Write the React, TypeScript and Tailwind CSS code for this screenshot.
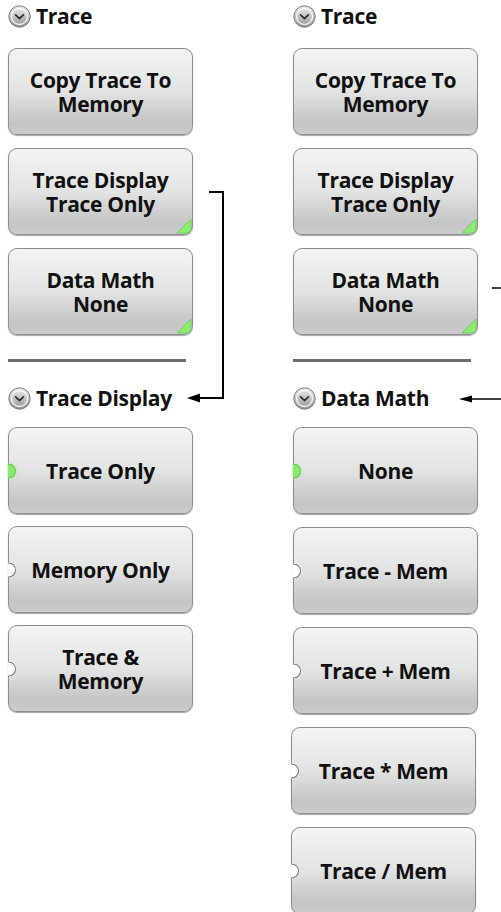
import React from "react";

type Btn = {
  lines: string[];
  corner?: boolean;
  radio?: "on" | "off";
  shift?: boolean;
};

const ChevronIcon = () => (
  <svg width="23" height="23" viewBox="0 0 23 23" className="shrink-0">
    <defs>
      <linearGradient id="chev" x1="0" y1="0" x2="0" y2="1">
        <stop offset="0" stopColor="#ececec" />
        <stop offset="0.5" stopColor="#c4c4c4" />
        <stop offset="1" stopColor="#8e8e8e" />
      </linearGradient>
    </defs>
    <circle cx="11.5" cy="11.5" r="10.7" fill="url(#chev)" stroke="#7d7d7d" strokeWidth="1" />
    <circle cx="11.5" cy="11.5" r="8" fill="none" stroke="#ffffff" strokeWidth="1.3" opacity="0.85" />
    <path d="M7.6 9.8 L11.5 13.6 L15.4 9.8" fill="none" stroke="#2e2e2e" strokeWidth="1.7" strokeLinecap="round" strokeLinejoin="round" />
  </svg>
);

const Header = ({ title }: { title: string }) => (
  <div className="flex items-center gap-[5px] h-[32px]">
    <ChevronIcon />
    <span className="text-[21px] font-bold text-[#111] leading-none tracking-[-0.3px]">{title}</span>
  </div>
);

const SoftButton = ({ b }: { b: Btn }) => (
  <div
    className={`relative w-[185px] h-[87px] rounded-[9px] border-[1.5px] border-[#8d8d8d] bg-linear-to-b from-[#f3f4f4] via-[#e2e3e3] to-[#b9baba] shadow-[0_1px_1px_rgba(0,0,0,0.35)] flex items-center justify-center ${
      b.shift ? "-ml-[2px]" : ""
    }`}
  >
    <div className="absolute inset-x-0 bottom-0 h-[12px] rounded-b-[8px] bg-linear-to-b from-transparent to-[#d4d5d5] opacity-70" />
    <p className="relative text-center text-[21px] font-bold leading-[24px] tracking-[-0.3px] text-[#111]">
      {b.lines.map((l, i) => (
        <React.Fragment key={i}>
          {i > 0 && <br />}
          {l}
        </React.Fragment>
      ))}
    </p>
    {b.corner && (
      <svg width="16" height="16" viewBox="0 0 16 16" className="absolute right-[0px] bottom-[0px]">
        <path d="M15 1 L15 10 Q15 15 10 15 L1 15 Z" fill="#8cec72" stroke="#62c44e" strokeWidth="0.7" />
      </svg>
    )}
    {b.radio && (
      <span
        className={`absolute left-[-1px] top-1/2 -translate-y-1/2 w-[8px] h-[15px] rounded-r-full border-[1px] border-l-0 ${
          b.radio === "on"
            ? "bg-[#8ae96f] border-[#63c24f] shadow-[0_0_3px_#9df58a]"
            : "bg-white border-[#7a7a7a]"
        }`}
      />
    )}
  </div>
);

const Separator = () => <div className="h-[3px] w-[178px] bg-[#6e6e6e]" />;

const topButtons: Btn[] = [
  { lines: ["Copy Trace To", "Memory"] },
  { lines: ["Trace Display", "Trace Only"], corner: true },
  { lines: ["Data Math", "None"], corner: true },
];

const displayButtons: Btn[] = [
  { lines: ["Trace Only"], radio: "on" },
  { lines: ["Memory Only"], radio: "off" },
  { lines: ["Trace &", "Memory"], radio: "off" },
];

const mathButtons: Btn[] = [
  { lines: ["None"], radio: "on" },
  { lines: ["Trace - Mem"], radio: "off" },
  { lines: ["Trace + Mem"], radio: "off" },
  { lines: ["Trace * Mem"], radio: "off", shift: true },
  { lines: ["Trace / Mem"], radio: "off", shift: true },
];

const Column = ({ bottomTitle, bottom, gap }: { bottomTitle: string; bottom: Btn[]; gap: string }) => (
  <div className="flex flex-col w-[185px]">
    <Header title="Trace" />
    <div className="flex flex-col gap-[13px] mt-[16px]">
      {topButtons.map((b, i) => (
        <SoftButton key={i} b={b} />
      ))}
    </div>
    <div className="mt-[24px]">
      <Separator />
    </div>
    <div className="mt-[20px]">
      <Header title={bottomTitle} />
    </div>
    <div className={`flex flex-col mt-[13px] ${gap}`}>
      {bottom.map((b, i) => (
        <SoftButton key={i} b={b} />
      ))}
    </div>
  </div>
);

export default function App() {
  return (
    <div
      className="relative w-[501px] h-[912px] overflow-hidden bg-white"
      style={{ fontFamily: "'Open Sans', 'Liberation Sans', sans-serif" }}
    >
      <div className="flex pl-[8px] gap-[100px]">
        <Column bottomTitle="Trace Display" bottom={displayButtons} gap="gap-[12px]" />
        <Column bottomTitle="Data Math" bottom={mathButtons} gap="gap-[13px]" />
      </div>
      {/* connector arrows */}
      <svg className="absolute inset-0 pointer-events-none" width="501" height="912">
        <path d="M209 192 H223 V398 H198" fill="none" stroke="#000" strokeWidth="2" />
        <path d="M187 398 L200 393.5 L200 402.5 Z" fill="#000" />
        <path d="M492 288 H501" fill="none" stroke="#000" strokeWidth="1.5" />
        <path d="M501 399 H470" fill="none" stroke="#000" strokeWidth="1.5" />
        <path d="M459 399 L472 395.5 L472 402.5 Z" fill="#000" />
      </svg>
    </div>
  );
}
